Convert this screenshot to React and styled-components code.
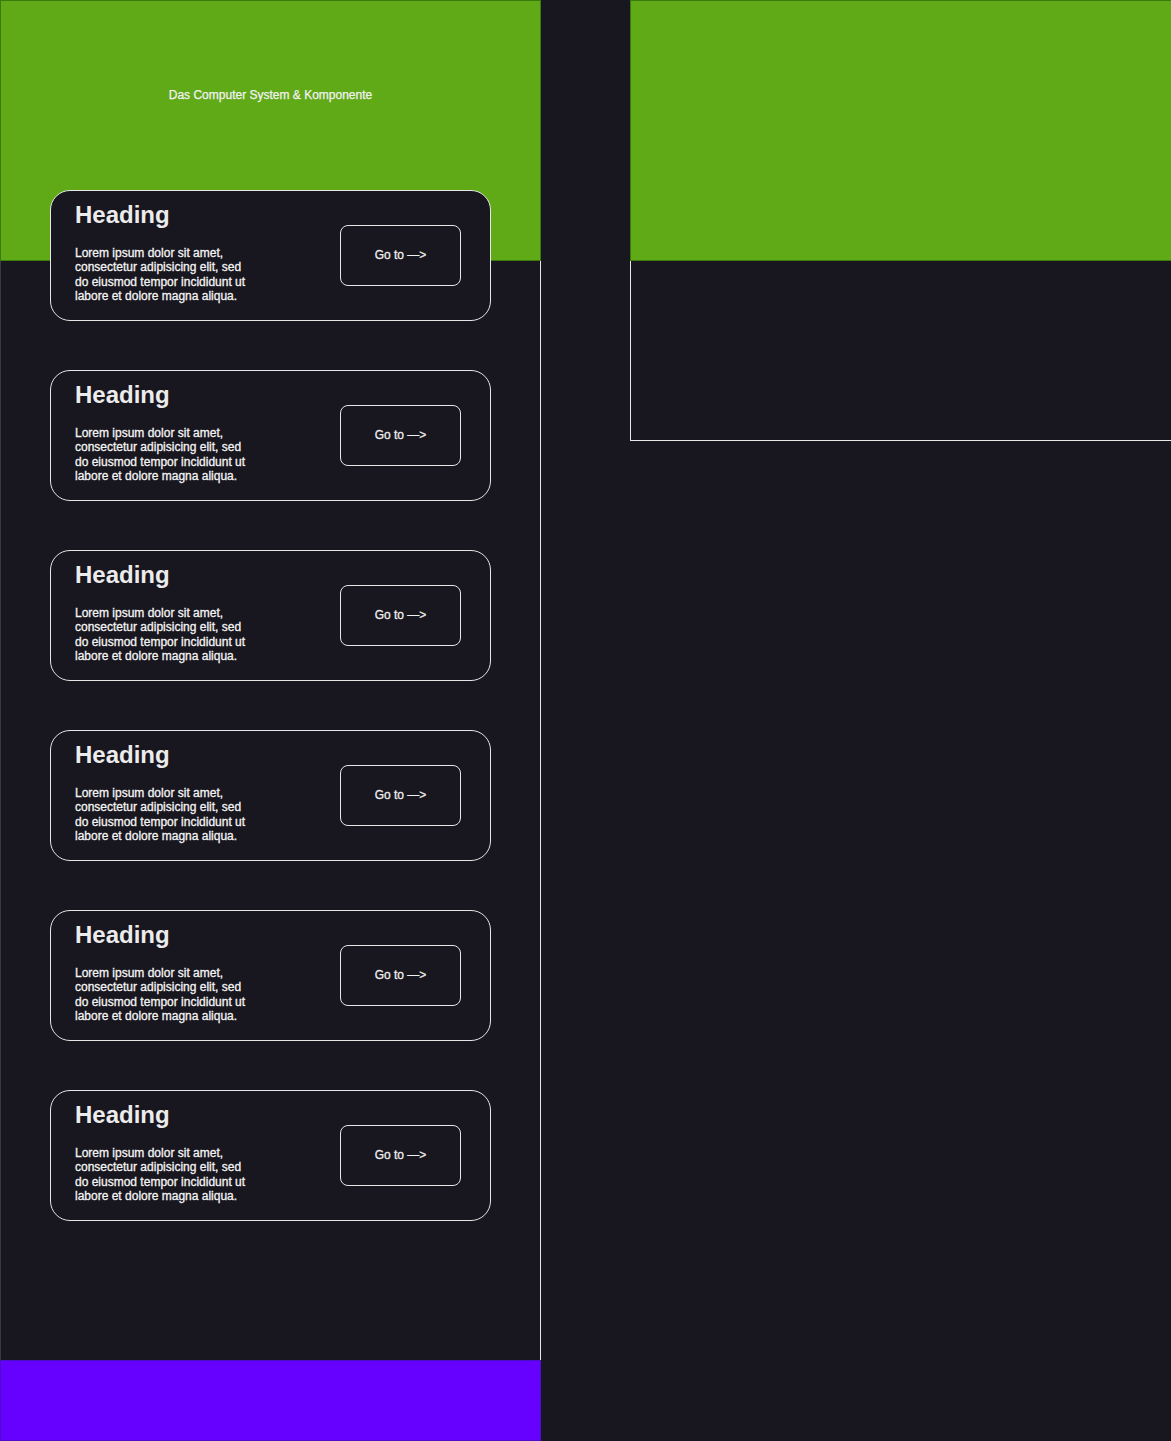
import React from "react";
import styled, { createGlobalStyle } from "styled-components";

const GlobalStyle = createGlobalStyle`
  * {
    box-sizing: border-box;
  }
  html,
  body {
    margin: 0;
    padding: 0;
    background: #18161e;
    font-family: "Liberation Sans", Arial, sans-serif;
    color: #eeeeee;
  }
`;

const Page = styled.div`
  display: flex;
  gap: 89px;
  width: 1171px;
  min-height: 1441px;
  overflow: hidden;
`;

const LeftColumn = styled.div`
  display: flex;
  flex-direction: column;
  width: 541px;
  flex-shrink: 0;
`;

const Header = styled.header`
  display: flex;
  justify-content: center;
  height: 261px;
  padding-top: 87px;
  background: #60a917;
  border: 1px solid #3b7b0b;
  font-size: 12px;
  color: #f2f2f2;
  -webkit-text-stroke: 0.25px #f2f2f2;
`;

const Content = styled.main`
  display: flex;
  flex-direction: column;
  height: 1099px;
  border-left: 1px solid #3a3842;
  border-right: 1px solid #e8e8e8;
`;

const CardList = styled.div`
  display: flex;
  flex-direction: column;
  gap: 49px;
  margin-top: -71px;
  padding-left: 49px;
`;

const Card = styled.section`
  display: flex;
  align-items: center;
  justify-content: space-between;
  width: 441px;
  height: 131px;
  padding: 0 29px 0 24px;
  background: #18161e;
  border: 1px solid #e6e6e6;
  border-radius: 20px;
`;

const CardText = styled.div`
  display: flex;
  flex-direction: column;
  align-self: flex-start;
  padding-top: 10px;
`;

const Heading = styled.h2`
  margin: 0 0 17px;
  font-size: 24px;
  font-weight: 700;
  line-height: 28px;
  color: #ececec;
`;

const Text = styled.p`
  width: 180px;
  margin: 0;
  font-size: 12px;
  line-height: 14.3px;
  font-weight: 400;
  color: #f4f4f4;
  -webkit-text-stroke: 0.3px #f4f4f4;
`;

const GoButton = styled.button`
  width: 121px;
  height: 61px;
  padding: 0 0 1px;
  background: transparent;
  border: 1px solid #e6e6e6;
  border-radius: 8px;
  font-family: inherit;
  font-size: 12px;
  color: #eeeeee;
  -webkit-text-stroke: 0.3px #eeeeee;
  cursor: pointer;
`;

const Footer = styled.footer`
  height: 81px;
  background: #6600ff;
  border: 1px solid #4a10c8;
`;

const RightColumn = styled.div`
  display: flex;
  flex-direction: column;
  width: 542px;
  flex-shrink: 0;
`;

const RightHeader = styled.div`
  height: 261px;
  background: #60a917;
  border: 1px solid #3b7b0b;
`;

const RightBox = styled.div`
  height: 180px;
  border-left: 1px solid #e8e8e8;
  border-bottom: 1px solid #e8e8e8;
`;

const cards = [1, 2, 3, 4, 5, 6];

function App() {
  return (
    <>
      <GlobalStyle />
      <Page>
        <LeftColumn>
          <Header>Das Computer System &amp; Komponente</Header>
          <Content>
            <CardList>
              {cards.map((id) => (
                <Card key={id}>
                  <CardText>
                    <Heading>Heading</Heading>
                    <Text>
                      Lorem ipsum dolor sit amet, consectetur adipisicing elit,
                      sed do eiusmod tempor incididunt ut labore et dolore magna
                      aliqua.
                    </Text>
                  </CardText>
                  <GoButton>Go to —&gt;</GoButton>
                </Card>
              ))}
            </CardList>
          </Content>
          <Footer />
        </LeftColumn>
        <RightColumn>
          <RightHeader />
          <RightBox />
        </RightColumn>
      </Page>
    </>
  );
}

export default App;
